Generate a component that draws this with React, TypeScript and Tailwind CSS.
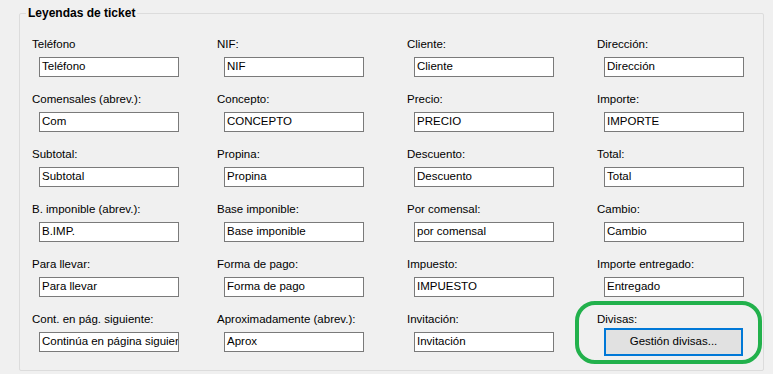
import React from 'react';

type Field = { label: string; value: string };

const rows: Field[][] = [
  [
    { label: 'Teléfono', value: 'Teléfono' },
    { label: 'NIF:', value: 'NIF' },
    { label: 'Cliente:', value: 'Cliente' },
    { label: 'Dirección:', value: 'Dirección' },
  ],
  [
    { label: 'Comensales (abrev.):', value: 'Com' },
    { label: 'Concepto:', value: 'CONCEPTO' },
    { label: 'Precio:', value: 'PRECIO' },
    { label: 'Importe:', value: 'IMPORTE' },
  ],
  [
    { label: 'Subtotal:', value: 'Subtotal' },
    { label: 'Propina:', value: 'Propina' },
    { label: 'Descuento:', value: 'Descuento' },
    { label: 'Total:', value: 'Total' },
  ],
  [
    { label: 'B. imponible (abrev.):', value: 'B.IMP.' },
    { label: 'Base imponible:', value: 'Base imponible' },
    { label: 'Por comensal:', value: 'por comensal' },
    { label: 'Cambio:', value: 'Cambio' },
  ],
  [
    { label: 'Para llevar:', value: 'Para llevar' },
    { label: 'Forma de pago:', value: 'Forma de pago' },
    { label: 'Impuesto:', value: 'IMPUESTO' },
    { label: 'Importe entregado:', value: 'Entregado' },
  ],
  [
    { label: 'Cont. en pág. siguiente:', value: 'Continúa en página siguiente' },
    { label: 'Aproximadamente (abrev.):', value: 'Aprox' },
    { label: 'Invitación:', value: 'Invitación' },
  ],
];

const LegendField: React.FC<{ field: Field }> = ({ field }) => (
  <div className="flex flex-col">
    <span className="h-[14px] leading-[14px] text-[11.5px] text-black whitespace-nowrap">{field.label}</span>
    <div className="ml-[7px] mt-[6px] w-[140px] h-[20px] bg-white border border-[#7a7a7a] px-[2px] flex items-center overflow-hidden">
      <span className="text-[11.5px] text-black whitespace-nowrap leading-none">{field.value}</span>
    </div>
  </div>
);

export default function App() {
  return (
    <div
      className="relative w-[773px] h-[374px] bg-[#f0f0f0] pl-[19px] pt-[6px] overflow-hidden"
      style={{ fontFamily: '"Liberation Sans", Arial, sans-serif' }}
    >
      <fieldset className="w-[745px] h-[365px] border border-[#dcdcdc] rounded-[2px] pl-[12px] pt-[16px]">
        <legend className="-ml-[6px] px-[2px] h-[15px] leading-[15px] text-[12px] font-bold text-black">
          Leyendas de ticket
        </legend>
        <div className="grid grid-cols-[185px_190px_190px_160px] gap-y-[15px]">
          {rows.map((row, ri) =>
            row.map((f, ci) => <LegendField key={`${ri}-${ci}`} field={f} />)
          )}
          <div className="flex flex-col">
            <span className="h-[14px] leading-[14px] text-[11.5px] text-black">Divisas:</span>
            <button className="ml-[7px] mt-[2px] w-[139px] h-[28px] bg-[#e1e1e1] border-2 border-[#0078d7] text-[11.5px] text-black">
              Gestión divisas...
            </button>
          </div>
        </div>
      </fieldset>
      {/* anotación verde sobre el botón de divisas */}
      <div className="absolute left-[575px] top-[301px] w-[187px] h-[63px] border-4 border-[#22b14c] rounded-[20px] pointer-events-none" />
    </div>
  );
}
